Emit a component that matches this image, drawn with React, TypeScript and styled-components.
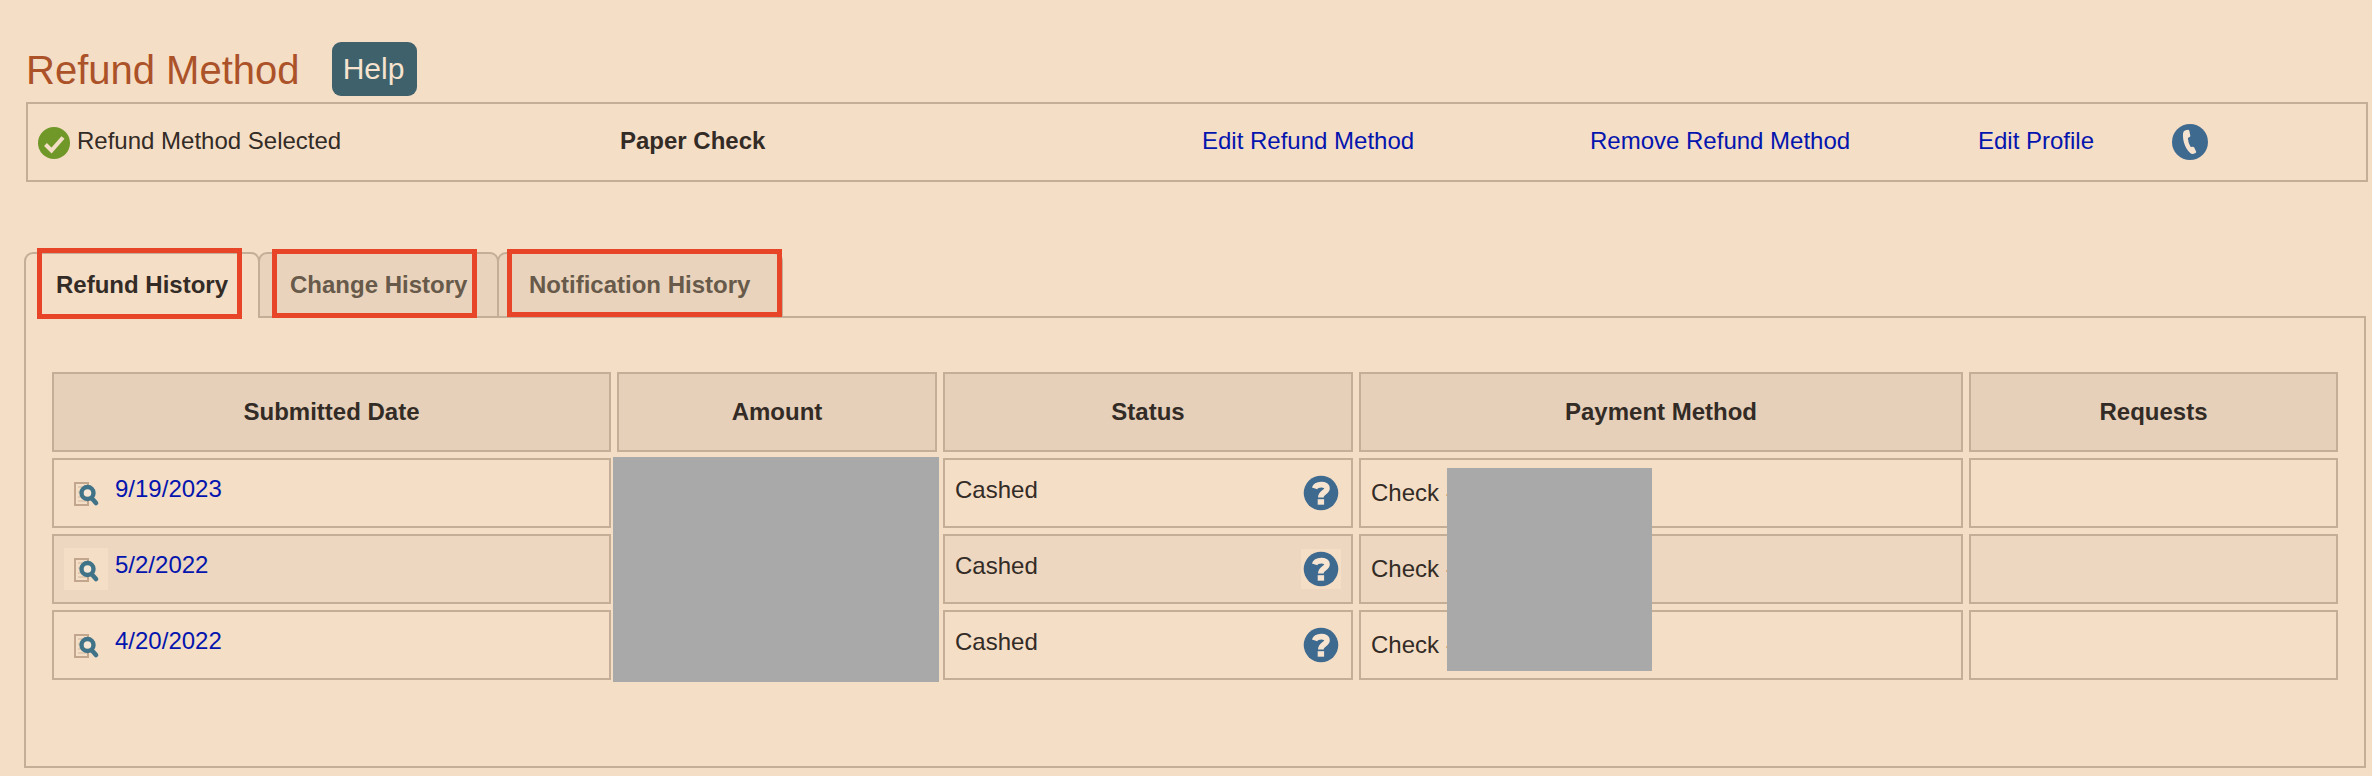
import React from "react";
import styled, { createGlobalStyle } from "styled-components";

const color = {
  page: "#f5dec6",
  line: "#c5ae97",
  head: "#e7d0b9",
  stripe: "#edd7c0",
  tab: "#ead3bc",
  text: "#332b26",
  muted: "#675a4a",
  link: "#0415ae",
  blue: "#3f6a8f",
  mask: "#a9a9a9",
  mark: "#e84427",
};

const GlobalStyle = createGlobalStyle`
  * { box-sizing: border-box; }
  body {
    margin: 0;
    background: ${color.page};
    color: ${color.text};
    font: 24px/28px "Liberation Sans", Arial, sans-serif;
  }
`;

const Page = styled.main`
  height: 776px;
  padding: 42px 4px 0 24px;
  overflow: hidden;
`;

const Heading = styled.header`
  display: flex;
  height: 60px;
  padding-left: 2px;
`;

const Title = styled.h1`
  width: 306px;
  margin: 5px 0 0;
  font-size: 40px;
  font-weight: 400;
  line-height: 46px;
  color: #ac5229;
`;

const HelpButton = styled.button`
  width: 85px;
  height: 54px;
  padding: 0 2px 1px 0;
  border: 0;
  border-radius: 9px;
  background: #3e616c;
  color: #f7e3ce;
  font: 30px/50px "Liberation Sans", Arial, sans-serif;
`;

const MethodBar = styled.section`
  display: grid;
  grid-template-columns: 582px 582px 388px 388px 194px 1fr;
  height: 80px;
  margin-left: 2px;
  padding: 23px 0 0 10px;
  border: 2px solid ${color.line};
`;

const Selected = styled.div`
  display: flex;
  gap: 7px;
`;

const Strong = styled.strong`
  font-weight: 700;
`;

const Link = styled.a`
  color: ${color.link};
`;

const CheckIcon = styled.svg`
  width: 32px;
  height: 32px;
`;

const PhoneIcon = styled.svg`
  width: 36px;
  height: 36px;
  margin-top: -3px;
`;

const Tabs = styled.nav`
  display: flex;
  height: 66px;
  margin-top: 70px;
`;

const Tab = styled.div<{ $width: number; $active?: boolean }>`
  position: relative;
  z-index: 1;
  width: ${(p) => p.$width}px;
  height: 66px;
  margin-right: -2px;
  padding: 17px 0 ${(p) => (p.$active ? 2 : 0)}px 30px;
  border: 2px solid ${color.line};
  border-bottom-width: ${(p) => (p.$active ? 0 : 2)}px;
  border-radius: 9px 9px 0 0;
  background: ${(p) => (p.$active ? color.page : color.tab)};
  color: ${(p) => (p.$active ? color.text : color.muted)};
  font-weight: 700;
  white-space: nowrap;
`;

const Marker = styled.span<{ $x: number; $y: number; $w: number; $h: number }>`
  position: absolute;
  left: ${(p) => p.$x}px;
  top: ${(p) => p.$y}px;
  width: ${(p) => p.$w}px;
  height: ${(p) => p.$h}px;
  border: 5px solid ${color.mark};
`;

const Panel = styled.section`
  width: 2342px;
  height: 452px;
  margin-top: -2px;
  padding: 54px 26px 0;
  border: 2px solid ${color.line};
`;

const Table = styled.div`
  position: relative;
  display: flex;
  flex-direction: column;
  gap: 6px;
`;

const Row = styled.div`
  display: grid;
  grid-template-columns: 559px 320px 410px 604px 369px;
  gap: 6px;
`;

const HeadCell = styled.div`
  height: 80px;
  padding-top: 24px;
  border: 2px solid ${color.line};
  background: ${color.head};
  font-weight: 700;
  text-align: center;
`;

const Cell = styled.div<{ $striped: boolean; $top?: number }>`
  display: flex;
  height: 70px;
  padding: ${(p) => p.$top ?? 12}px 10px 0;
  border: 2px solid ${color.line};
  background: ${(p) => (p.$striped ? color.stripe : color.page)};
`;

const DateLink = styled(Link)`
  margin: 7px 0 0 7px;
`;

const Detail = styled.svg`
  width: 44px;
  height: 42px;
  margin-top: 4px;
  background: ${color.page};
`;

const HelpIcon = styled.svg`
  width: 40px;
  height: 40px;
  margin: 0 0 0 auto;
  background: ${color.page};
`;

const StatusText = styled.span`
  margin-top: 3px;
`;

const Mask = styled.div<{ $x: number; $y: number; $w: number; $h: number }>`
  position: absolute;
  left: ${(p) => p.$x}px;
  top: ${(p) => p.$y}px;
  width: ${(p) => p.$w}px;
  height: ${(p) => p.$h}px;
  background: ${color.mask};
`;

const columns = ["Submitted Date", "Amount", "Status", "Payment Method", "Requests"];
const refunds = ["9/19/2023", "5/2/2022", "4/20/2022"];

const DetailIcon = () => (
  <Detail viewBox="0 0 44 42" fill="none">
    <path d="M11 11h13v22H11z" stroke="#c2a78e" strokeWidth="2" />
    <path d="M14 15h7M14 20h7M14 25h7M14 29h9" stroke="#dbc3ab" strokeWidth="1.5" />
    <circle cx="23.5" cy="21" r="6" fill="#f5e6d5" stroke="#417388" strokeWidth="4.400" />
    <path d="m28 26.500 4 4.500" stroke="#417388" strokeWidth="4.600" strokeLinecap="round" />
  </Detail>
);

const QuestionIcon = () => (
  <HelpIcon viewBox="0 0 40 40" fill="none">
    <circle cx="20" cy="20" r="17.300" fill={color.blue} />
    <path d="M13.600 15.300c1.500-4.600 12.400-5.300 12.400.2 0 3.800-6.200 4-6.200 9" stroke="#f7e5d2" strokeWidth="5.600" />
    <path d="M16.700 26.200h6.400v5.500h-6.400z" fill="#f7e5d2" />
  </HelpIcon>
);

export default function App() {
  return (
    <>
      <GlobalStyle />
      <Page>
        <Heading>
          <Title>Refund Method</Title>
          <HelpButton>Help</HelpButton>
        </Heading>
        <MethodBar>
          <Selected>
            <CheckIcon viewBox="0 0 32 32" fill="none">
              <circle cx="16" cy="16" r="16" fill="#6f9829" />
              <path d="m7.500 17.500 6 6L25 10.500" stroke="#f5dec6" strokeWidth="4" />
            </CheckIcon>
            <span>Refund Method Selected</span>
          </Selected>
          <Strong>Paper Check</Strong>
          <Link>Edit Refund Method</Link>
          <Link>Remove Refund Method</Link>
          <Link>Edit Profile</Link>
          <PhoneIcon viewBox="0 0 36 36">
            <circle cx="18" cy="18" r="18" fill={color.blue} />
            <path
              d="M13.500 6.200 16 5.700Q17 5.700 17.300 6.700L18.300 11.500Q18.500 12.600 17.600 13L15.800 14Q16.100 18.800 18.700 23L20.800 22.800Q21.800 22.800 22.200 23.600L24.100 27.500Q24.500 28.400 23.600 29L21 30Q19.500 30.300 18.200 29C13.500 25 10.500 17 11 9.500Q11.300 6.800 13.500 6.200Z"
              fill="#f5e3cf"
            />
          </PhoneIcon>
        </MethodBar>
        <Tabs>
          <Tab $width={236} $active>
            Refund History
            <Marker $x={11} $y={-6} $w={205} $h={71} />
          </Tab>
          <Tab $width={241}>
            Change History
            <Marker $x={12} $y={-5} $w={205} $h={69} />
          </Tab>
          <Tab $width={286}>
            Notification History
            <Marker $x={8} $y={-5} $w={275} $h={68} />
          </Tab>
        </Tabs>
        <Panel>
          <Table>
            <Row>
              {columns.map((name) => (
                <HeadCell key={name}>{name}</HeadCell>
              ))}
            </Row>
            {refunds.map((date, i) => {
              const striped = i % 2 === 1;
              return (
                <Row key={date}>
                  <Cell $striped={striped} $top={8}>
                    <DetailIcon />
                    <DateLink>{date}</DateLink>
                  </Cell>
                  <Cell $striped={striped} />
                  <Cell $striped={striped} $top={13}>
                    <StatusText>Cashed</StatusText>
                    <QuestionIcon />
                  </Cell>
                  <Cell $striped={striped} $top={19}>Check -</Cell>
                  <Cell $striped={striped} />
                </Row>
              );
            })}
            <Mask $x={561} $y={85} $w={326} $h={225} />
            <Mask $x={1395} $y={96} $w={205} $h={203} />
          </Table>
        </Panel>
      </Page>
    </>
  );
}
